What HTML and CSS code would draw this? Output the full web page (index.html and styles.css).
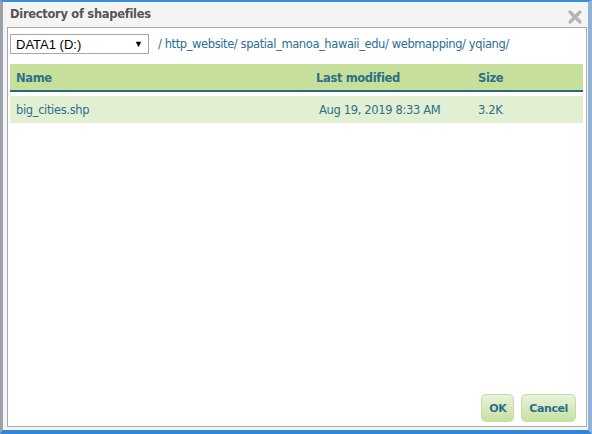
FILE: index.html
```html
<!DOCTYPE html>
<html>
<head>
<meta charset="utf-8">
<link rel="stylesheet" href="styles.css">
</head>
<body>
<div class="dialog">
  <div class="titlebar">
    <span class="title">Directory of shapefiles</span>
    <span class="close">
      <svg width="16" height="16" viewBox="0 0 16 16"><path d="M3 3 L13 13 M13 3 L3 13" stroke="#b4b4b4" stroke-width="3.2" stroke-linecap="round"/></svg>
    </span>
  </div>
  <div class="content">
    <div class="pathbar">
      <div class="select"><span>DATA1 (D:)</span><span class="arrow">▼</span></div>
      <div class="path">/ http_website/ spatial_manoa_hawaii_edu/ webmapping/ yqiang/</div>
    </div>
    <div class="table">
      <div class="row head">
        <div class="c-name">Name</div>
        <div class="c-mod">Last modified</div>
        <div class="c-size">Size</div>
      </div>
      <div class="row item">
        <div class="c-name">big_cities.shp</div>
        <div class="c-mod date">Aug 19, 2019 8:33 AM</div>
        <div class="c-size">3.2K</div>
      </div>
    </div>
    <div class="spacer"></div>
    <div class="buttons">
      <button class="btn">OK</button>
      <button class="btn">Cancel</button>
    </div>
  </div>
</div>
</body>
</html>
```
FILE: styles.css
```css
html, body {
  margin: 0;
  padding: 0;
  width: 592px;
  height: 434px;
  overflow: hidden;
  background: #fff;
}
.dialog {
  box-sizing: border-box;
  width: 592px;
  height: 434px;
  border-top: 2px solid #3a8ee0;
  border-bottom: 4px solid #2f86dc;
  border-left: 3px solid #9aa0a8;
  border-right: 4px solid #8fb2d6;
  background: #f4f4f4;
  display: flex;
  flex-direction: column;
  padding: 0 1px 3px 4px;
  font-family: "DejaVu Sans", Verdana, sans-serif;
}
.titlebar {
  height: 25px;
  display: flex;
  align-items: center;
  justify-content: space-between;
  padding: 0 4px 0 3px;
}
.title {
  font-weight: bold;
  font-size: 11.5px;
  color: #555;
  letter-spacing: -0.3px;
  margin-top: -1px;
}
.close {
  display: flex;
  margin-top: 4px;
}
.content {
  flex: 1;
  background: #fff;
  border: 1px solid #a9a9a9;
  display: flex;
  flex-direction: column;
  padding: 6px 3px 4px 2px;
}
.pathbar {
  display: flex;
  align-items: center;
  height: 20px;
}
.select {
  box-sizing: border-box;
  width: 139px;
  height: 20px;
  border: 1px solid #a6a6a6;
  display: flex;
  align-items: center;
  justify-content: space-between;
  padding: 0 5px 0 5px;
  font-family: "Liberation Sans", Arial, sans-serif;
  font-size: 13px;
  color: #000;
}
.arrow {
  font-size: 9px;
}
.path {
  margin-left: 9px;
  font-size: 11.5px;
  color: #2a6f8f;
  letter-spacing: -0.4px;
}
.table {
  margin-top: 10px;
}
.row {
  display: flex;
  align-items: center;
  font-size: 11.5px;
  color: #2a6f8f;
  letter-spacing: -0.35px;
}
.head {
  height: 25px;
  background: #c6df9a;
  border-bottom: 2px solid #2a6a80;
  font-weight: bold;
  color: #2d7088;
  padding-top: 1px;
  box-sizing: content-box;
}
.item {
  height: 26px;
  margin-top: 4px;
  background: #e2efd2;
  padding-top: 1px;
}
.c-name {
  width: 300px;
  padding-left: 6px;
}
.c-mod {
  width: 162px;
}
.date {
  padding-left: 3px;
  width: 159px;
}
.c-size {
  flex: 1;
}
.spacer {
  flex: 1;
}
.buttons {
  display: flex;
  justify-content: flex-end;
  gap: 7px;
  padding-right: 7px;
}
.btn {
  height: 28px;
  padding: 0 7px;
  border: 1px solid #c7dda6;
  border-radius: 5px;
  background: linear-gradient(#e9f3da, #c7e0a0);
  font-family: "DejaVu Sans", Verdana, sans-serif;
  font-weight: bold;
  font-size: 11px;
  color: #2a6f8f;
  letter-spacing: -0.4px;
}
```
